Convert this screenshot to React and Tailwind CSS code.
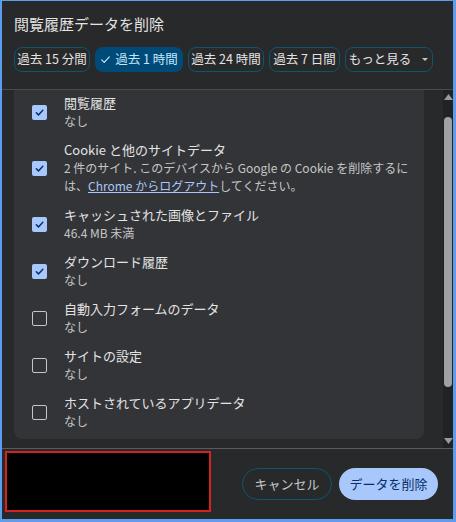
import { useState } from 'react';

const ranges = [
    { id: '15m', label: '過去 15 分間', w: 'w-[76px]' },
    { id: '1h', label: '過去 1 時間', w: 'w-[88px]' },
    { id: '24h', label: '過去 24 時間', w: 'w-[76px]' },
    { id: '7d', label: '過去 7 日間', w: 'w-[71px]' },
];

const dataTypes = [
    { id: 'history', title: '閲覧履歴', sub: 'なし', checked: true },
    { id: 'cookies', title: 'Cookie と他のサイトデータ', checked: true, cookie: true },
    { id: 'cache', title: 'キャッシュされた画像とファイル', sub: '46.4 MB 未満', checked: true },
    { id: 'downloads', title: 'ダウンロード履歴', sub: 'なし', checked: true },
    { id: 'autofill', title: '自動入力フォームのデータ', sub: 'なし', checked: false },
    { id: 'site', title: 'サイトの設定', sub: 'なし', checked: false },
    { id: 'hosted', title: 'ホストされているアプリデータ', sub: 'なし', checked: false },
];

function Checkbox({ checked, onChange }) {
    return (
        <button
            type="button"
            onClick={onChange}
            className={`w-[15px] h-[15px] shrink-0 rounded-[2px] flex items-center justify-center ${
                checked ? 'bg-[#a8c7fa]' : 'border-[1.5px] border-[#c4c7c5]'
            }`}
        >
            {checked && (
                <svg width="11" height="11" viewBox="0 0 12 12" fill="none">
                    <path d="M2.5 6.3 4.9 8.6 9.6 3.6" stroke="#062e6f" strokeWidth="1.6" strokeLinecap="round" strokeLinejoin="round" />
                </svg>
            )}
        </button>
    );
}

export default function App() {
    const [range, setRange] = useState('1h');
    const [checks, setChecks] = useState(
        Object.fromEntries(dataTypes.map((d) => [d.id, d.checked]))
    );

    return (
        <div
            className="w-[456px] h-[522px] bg-[#28292b] border-t border-l-2 border-r-[3px] border-b-[3px] border-[#5c9def] flex flex-col text-[#e3e3e3]"
            style={{ fontFamily: '"Noto Sans CJK JP", "Noto Sans", sans-serif' }}
        >
            {/* header */}
            <div className="px-3 pt-[12px] pb-[17px]">
                <h1 className="text-[15px] leading-[22px] font-normal">閲覧履歴データを削除</h1>
                <div className="flex gap-[5px] mt-[12px]">
                    {ranges.map((r) => {
                        const active = range === r.id;
                        return (
                            <button
                                key={r.id}
                                onClick={() => setRange(r.id)}
                                className={`${r.w} h-[25px] rounded-[8px] text-[12.5px] leading-none flex items-center justify-center gap-[4px] ${
                                    active ? 'bg-[#004a77] text-[#c2e7ff]' : 'border border-[#0f5470] text-[#e3e3e3]'
                                }`}
                            >
                                {active && (
                                    <svg width="11" height="11" viewBox="0 0 12 12" fill="none">
                                        <path d="M1.8 6.4 4.6 9.1 10.2 3.2" stroke="#c2e7ff" strokeWidth="1.3" strokeLinecap="round" strokeLinejoin="round" />
                                    </svg>
                                )}
                                {r.label}
                            </button>
                        );
                    })}
                    <button className="w-[88px] h-[25px] rounded-[8px] border border-[#0f5470] text-[12.5px] leading-none flex items-center justify-center gap-[10px]">
                        もっと見る
                        <svg width="8" height="5" viewBox="0 0 8 5">
                            <path d="M1 1h6L4 4z" fill="#c4c7c5" />
                        </svg>
                    </button>
                </div>
            </div>

            <div className="h-px bg-[#4a4b4d]" />

            {/* data type list */}
            <div className="flex h-[358px]">
                <div className="flex-1 pl-3 pr-[19px] overflow-hidden">
                    <div className="bg-[#333438] rounded-b-[8px] pb-[2px]">
                        {dataTypes.map((d) => (
                            <div key={d.id} className="flex items-center pt-[4px] pb-[7px]">
                                <div className="w-[50px] pl-[18px]">
                                    <Checkbox
                                        checked={checks[d.id]}
                                        onChange={() => setChecks({ ...checks, [d.id]: !checks[d.id] })}
                                    />
                                </div>
                                <div>
                                    <p className="text-[13px] leading-[18px] h-[18px]">{d.title}</p>
                                    {d.cookie ? (
                                        <>
                                            <p className="text-[12px] leading-[18px] h-[18px] text-[#c4c7c5]">
                                                2 件のサイト. このデバイスから Google の Cookie を削除するに
                                            </p>
                                            <p className="text-[12px] leading-[18px] h-[18px] text-[#c4c7c5]">
                                                は、<span className="text-[#a8c7fa] underline">Chrome からログアウト</span>してください。
                                            </p>
                                        </>
                                    ) : (
                                        <p className="text-[12px] leading-[18px] h-[18px] text-[#c4c7c5]">{d.sub}</p>
                                    )}
                                </div>
                            </div>
                        ))}
                    </div>
                </div>
                {/* scrollbar */}
                <div className="w-[10px] bg-[#212224] flex flex-col items-center">
                    <svg width="9" height="6" viewBox="0 0 9 6" className="mt-[4px]">
                        <path d="M4.5 0 9 6H0z" fill="#9a9a9a" />
                    </svg>
                    <div className="w-[8px] h-[270px] mt-[17px] rounded-full bg-[#a1a1a1]" />
                    <div className="flex-1" />
                    <svg width="9" height="6" viewBox="0 0 9 6" className="mb-[4px]">
                        <path d="M0 0h9L4.5 6z" fill="#9a9a9a" />
                    </svg>
                </div>
            </div>

            <div className="h-px bg-[#5a5b5d]" />

            {/* footer */}
            <div className="flex-1 flex pl-[3px] pr-[15px]">
                <div className="w-[206px] h-[61px] mt-[2px] bg-black border-2 border-[#d4231f]" />
                <div className="flex-1 flex items-center justify-end gap-[7px]">
                    <button className="w-[90px] h-[32px] rounded-full border border-[#0f5470] text-[13px] text-[#c4c7c5]">
                        キャンセル
                    </button>
                    <button className="w-[99px] h-[32px] rounded-full bg-[#a8c7fa] text-[13px] text-[#062e6f]">
                        データを削除
                    </button>
                </div>
            </div>
        </div>
    );
}
